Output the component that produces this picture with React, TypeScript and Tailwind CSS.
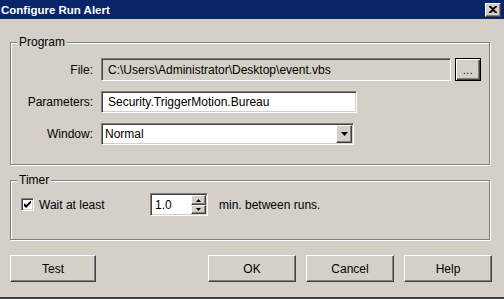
import React from "react";

const sunken =
  "border border-t-[#808080] border-l-[#808080] border-r-white border-b-white shadow-[inset_1px_1px_0_#404040,inset_-1px_-1px_0_#d4d0c8]";
const raised =
  "border border-t-white border-l-white border-r-[#404040] border-b-[#404040] shadow-[inset_-1px_-1px_0_#808080]";

function DownArrow({ w = 7, h = 4 }: { w?: number; h?: number }) {
  return (
    <svg width={w} height={h} viewBox={`0 0 ${w} ${h}`}>
      <polygon points={`0,0 ${w},0 ${w / 2},${h}`} fill="#000" />
    </svg>
  );
}

function UpArrow({ w = 5, h = 3 }: { w?: number; h?: number }) {
  return (
    <svg width={w} height={h} viewBox={`0 0 ${w} ${h}`}>
      <polygon points={`0,${h} ${w},${h} ${w / 2},0`} fill="#000" />
    </svg>
  );
}

function Row({ label, children }: { label: string; children: React.ReactNode }) {
  return (
    <div className="flex items-center">
      <span className="w-[82px] text-right">{label}</span>
      <div className="ml-[8px] flex items-center">{children}</div>
    </div>
  );
}

export default function App() {
  return (
    <div className="flex h-[299px] w-[504px] flex-col border-b-2 border-b-[#404040] bg-[#d4d0c8] font-['Liberation_Sans',Arial,sans-serif] text-[12px] leading-[14px] text-black">
      {/* title bar */}
      <div className="flex h-[19px] items-center justify-between bg-[#0a246a] pl-[1px] pr-[3px]">
        <span className="text-[11.5px] font-bold text-white">Configure Run Alert</span>
        <button className={`flex h-[14px] w-[16px] items-center justify-center bg-[#d4d0c8] ${raised}`}>
          <svg width="8" height="7" viewBox="0 0 8 7">
            <path d="M0 0h2l2 2 2-2h2v1L5 3.5 8 6v1H6L4 5 2 7H0V6l3-2.5L0 1z" fill="#000" />
          </svg>
        </button>
      </div>

      <div className="flex flex-col px-[10px] pt-[16px]">
        {/* Program */}
        <fieldset className="w-[480px] border border-[#808080] px-0 pt-[9px] pb-[19px] shadow-[inset_1px_1px_0_#fff,1px_1px_0_#fff]">
          <legend className="ml-[6px] bg-[#d4d0c8] px-[2px] leading-[14px]">Program</legend>
          <div className="flex flex-col gap-[10px]">
            <Row label="File:">
              <div className={`flex h-[23px] w-[350px] items-center bg-[#d4d0c8] pl-[6px] ${sunken}`}>
                C:\Users\Administrator\Desktop\event.vbs
              </div>
              <button className="ml-[4px] flex h-[23px] w-[26px] items-center justify-center border border-black bg-[#d4d0c8] shadow-[inset_1px_1px_0_#fff,inset_-1px_-1px_0_#404040,inset_-2px_-2px_0_#808080]">
                <span className="mt-[2px] text-[10px] tracking-[0.5px]">...</span>
              </button>
            </Row>
            <Row label="Parameters:">
              <div className={`flex h-[22px] w-[256px] items-center bg-white pl-[6px] ${sunken}`}>
                Security.TriggerMotion.Bureau
              </div>
            </Row>
            <Row label="Window:">
              <div className={`flex h-[22px] w-[253px] items-center justify-between bg-white pl-[3px] pr-[1px] ${sunken}`}>
                <span>Normal</span>
                <span className={`flex h-[18px] w-[16px] items-center justify-center bg-[#d4d0c8] ${raised}`}>
                  <DownArrow />
                </span>
              </div>
            </Row>
          </div>
        </fieldset>

        {/* Timer */}
        <fieldset className="mt-[8px] w-[480px] border border-[#808080] px-0 pt-[6px] pb-[23px] shadow-[inset_1px_1px_0_#fff,1px_1px_0_#fff]">
          <legend className="ml-[6px] bg-[#d4d0c8] px-[2px] leading-[14px]">Timer</legend>
          <div className="flex h-[23px] items-center">
            <span className={`ml-[10px] flex h-[13px] w-[13px] items-center justify-center bg-white ${sunken}`}>
              <svg width="7" height="7" viewBox="0 0 7 7">
                <path d="M0 2v3l2 2 5-5V-0.5L2 4z" fill="#000" />
              </svg>
            </span>
            <span className="ml-[5px] w-[111px]">Wait at least</span>
            <div className={`flex h-[23px] w-[58px] items-center justify-between bg-white pl-[4px] pr-[1px] ${sunken}`}>
              <span>1.0</span>
              <div className="flex flex-col">
                <span className={`flex h-[10px] w-[15px] items-center justify-center bg-[#d4d0c8] ${raised}`}>
                  <UpArrow />
                </span>
                <span className={`flex h-[9px] w-[15px] items-center justify-center bg-[#d4d0c8] ${raised}`}>
                  <DownArrow w={5} h={3} />
                </span>
              </div>
            </div>
            <span className="ml-[11px]">min. between runs.</span>
          </div>
        </fieldset>

        {/* buttons */}
        <div className="mt-[15px] flex">
          <button className={`h-[27px] w-[86px] bg-[#d4d0c8] ${raised}`}>Test</button>
          <div className="ml-[112px] flex gap-[10px]">
            <button className={`h-[27px] w-[88px] bg-[#d4d0c8] ${raised}`}>OK</button>
            <button className={`h-[27px] w-[88px] bg-[#d4d0c8] ${raised}`}>Cancel</button>
            <button className={`h-[27px] w-[88px] bg-[#d4d0c8] ${raised}`}>Help</button>
          </div>
        </div>
      </div>
    </div>
  );
}
